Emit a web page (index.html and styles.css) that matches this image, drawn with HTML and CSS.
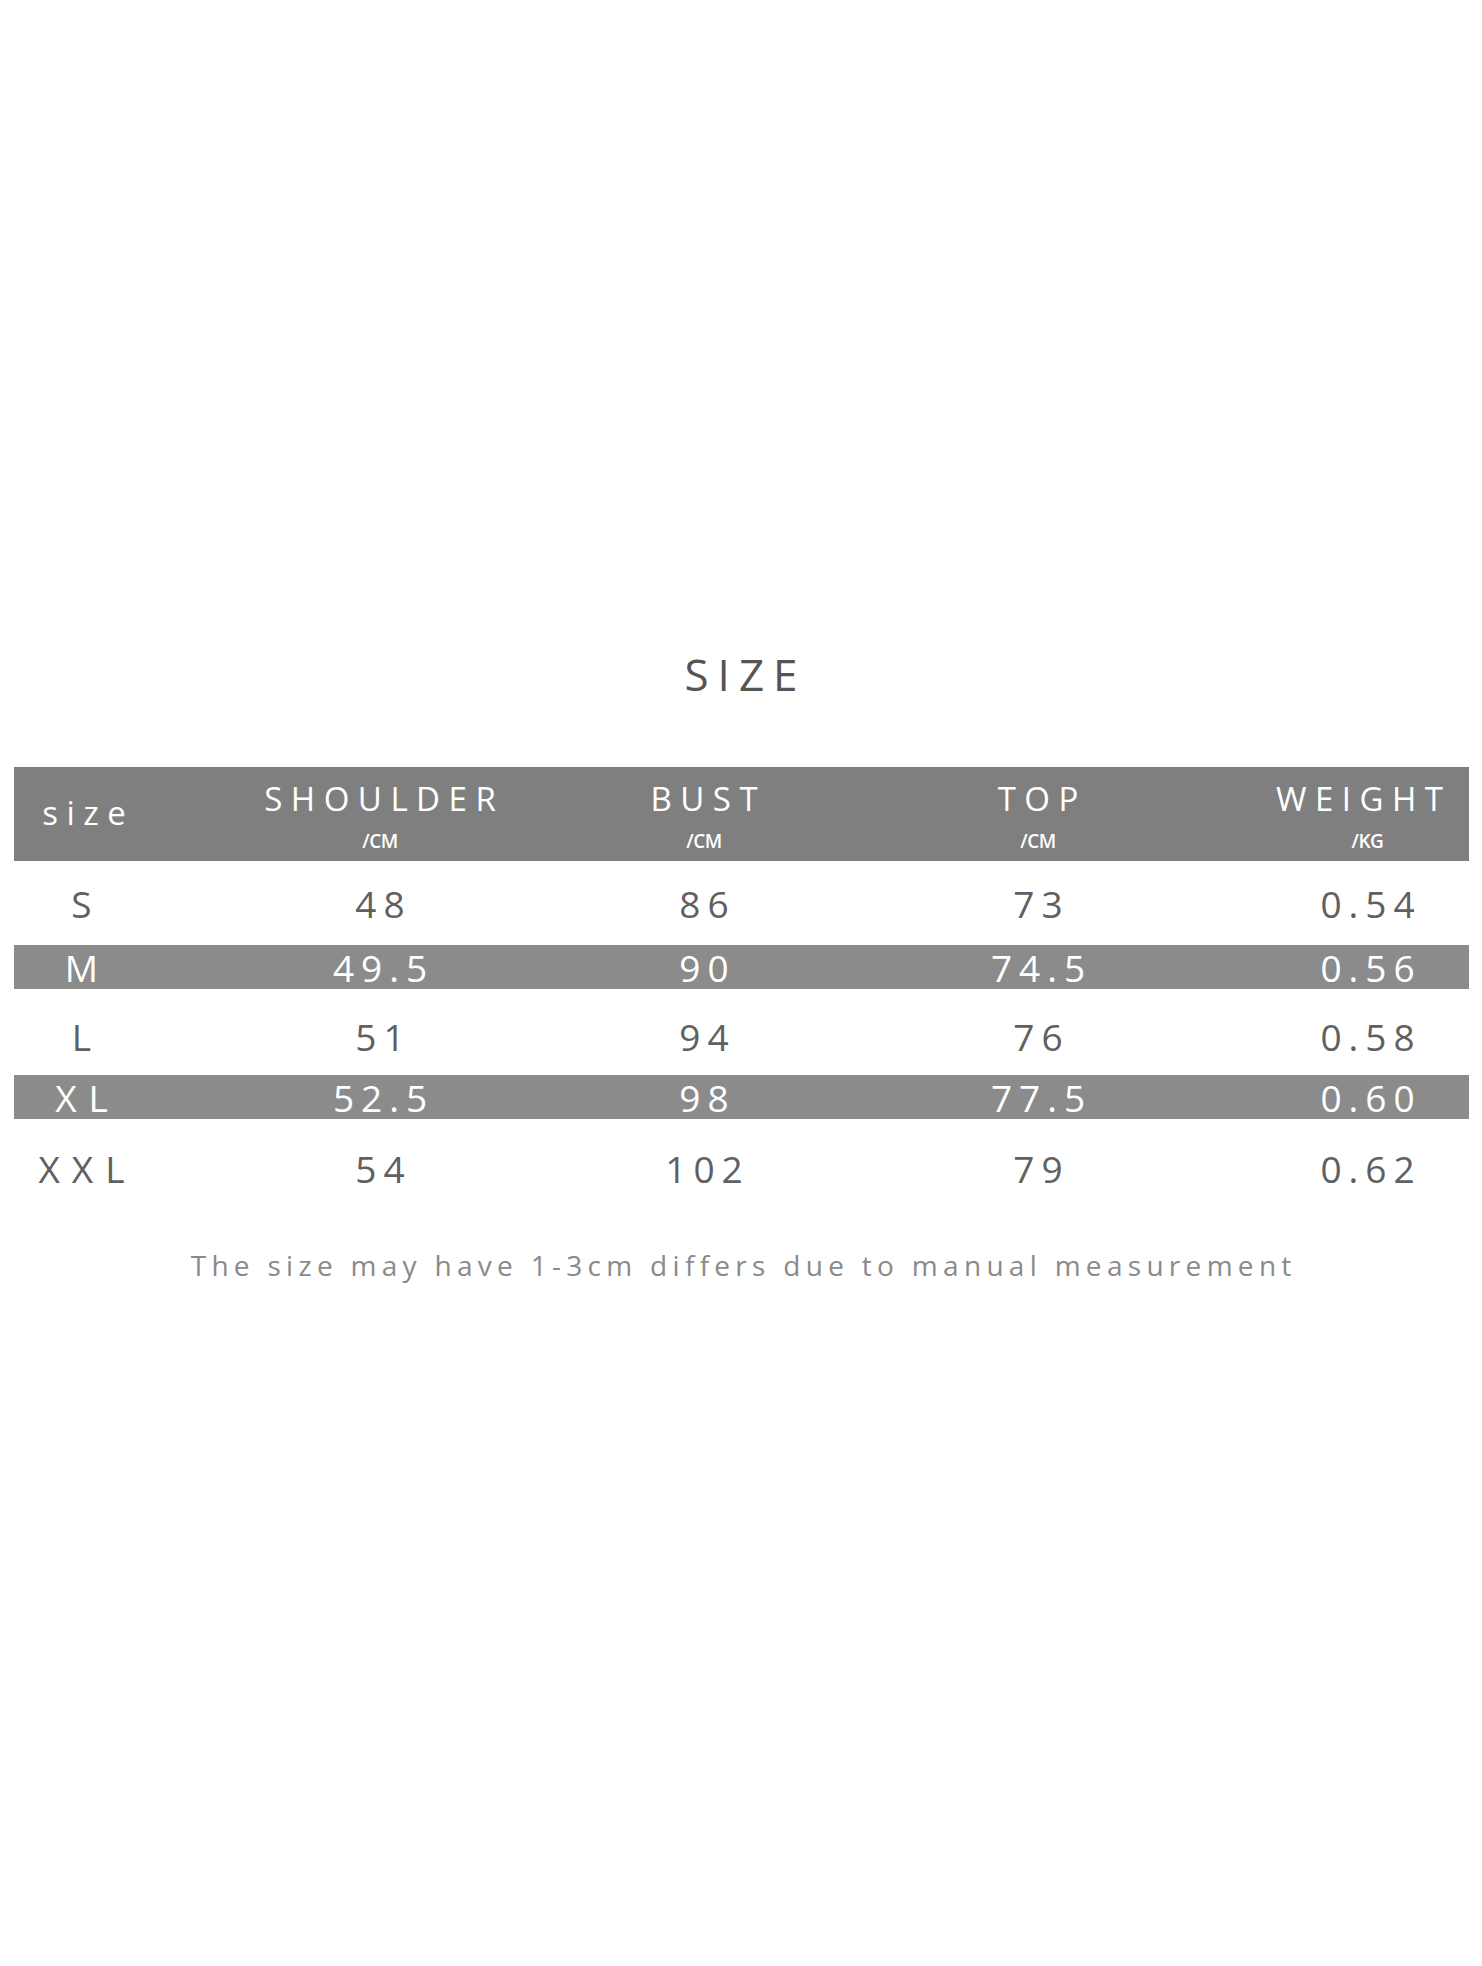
FILE: index.html
```html
<!DOCTYPE html>
<html lang="en">
<head>
<meta charset="utf-8">
<title>Size chart</title>
<link rel="stylesheet" href="styles.css">
</head>
<body>
<main class="sheet">
  <h1 class="title"><span class="ls">SIZE</span></h1>
  <section class="table">
    <div class="row head">
      <div class="cell hcell single"><span class="hlabel ls">size</span></div>
      <div class="cell hcell"><span class="hlabel ls">SHOULDER</span><span class="unit">/CM</span></div>
      <div class="cell hcell"><span class="hlabel ls">BUST</span><span class="unit">/CM</span></div>
      <div class="cell hcell"><span class="hlabel ls">TOP</span><span class="unit">/CM</span></div>
      <div class="cell hcell last"><span class="hlabel ls weight">WEIGHT</span><span class="unit">/KG</span></div>
    </div>
    <div class="row data r-s">
      <div class="cell first"><span class="ls">S</span></div>
      <div class="cell"><span class="ls">48</span></div>
      <div class="cell"><span class="ls">86</span></div>
      <div class="cell"><span class="ls">73</span></div>
      <div class="cell last"><span class="ls">0.54</span></div>
    </div>
    <div class="row data band">
      <div class="cell first"><span class="ls">M</span></div>
      <div class="cell"><span class="ls">49.5</span></div>
      <div class="cell"><span class="ls">90</span></div>
      <div class="cell"><span class="ls">74.5</span></div>
      <div class="cell last"><span class="ls">0.56</span></div>
    </div>
    <div class="row data r-l">
      <div class="cell first"><span class="ls">L</span></div>
      <div class="cell"><span class="ls">51</span></div>
      <div class="cell"><span class="ls">94</span></div>
      <div class="cell"><span class="ls">76</span></div>
      <div class="cell last"><span class="ls">0.58</span></div>
    </div>
    <div class="row data band">
      <div class="cell first"><span class="ls wide">XL</span></div>
      <div class="cell"><span class="ls">52.5</span></div>
      <div class="cell"><span class="ls">98</span></div>
      <div class="cell"><span class="ls">77.5</span></div>
      <div class="cell last"><span class="ls">0.60</span></div>
    </div>
    <div class="row data r-xxl">
      <div class="cell first"><span class="ls wide">XXL</span></div>
      <div class="cell"><span class="ls">54</span></div>
      <div class="cell"><span class="ls">102</span></div>
      <div class="cell"><span class="ls">79</span></div>
      <div class="cell last"><span class="ls">0.62</span></div>
    </div>
  </section>
  <p class="note"><span class="ls">The size may have 1-3cm differs due to manual measurement</span></p>
</main>
</body>
</html>
```

FILE: styles.css
```css
html, body {
  margin: 0;
  padding: 0;
  background: #ffffff;
}

body {
  font-family: "Open Sans", "DejaVu Sans", sans-serif;
  width: 1482px;
  min-height: 1966px;
}

.sheet {
  padding-top: 652px;
}

.title {
  margin: 0;
  font-size: 44px;
  line-height: 44px;
  font-weight: 400;
  color: #555555;
  text-align: center;
  letter-spacing: 9px;
}

.ls {
  display: inline-block;
}

.title .ls {
  margin-right: -9px;
}

.table {
  margin: 71px 13px 0 14px;
}

.row {
  display: grid;
  grid-template-columns: 140px 452px 196px 472px 1fr;
}

.cell {
  display: flex;
  justify-content: center;
  align-items: center;
}

.cell.first {
  padding-right: 5px;
}

.cell.last {
  padding-right: 8px;
}

.head {
  height: 94px;
  background: #7f7f7f;
  color: #ffffff;
  align-items: start;
}

.hcell {
  flex-direction: column;
  justify-content: flex-start;
  padding-top: 15px;
}

.hcell.single {
  padding-top: 29px;
}

.hlabel {
  font-size: 33px;
  line-height: 33px;
  letter-spacing: 8.5px;
  margin-right: -8.5px;
}

.hlabel.weight {
  margin-right: 7.5px;
}

.unit {
  margin-top: 17px;
  font-size: 19px;
  line-height: 19px;
  font-weight: 600;
  letter-spacing: -0.5px;
}

.data {
  font-size: 37px;
  line-height: 37px;
  color: #606060;
}

.data .ls {
  letter-spacing: 7px;
  margin-right: -7px;
}

.data .ls.wide {
  letter-spacing: 12px;
  margin-right: -12px;
}

.r-s {
  height: 84px;
}

.r-l {
  height: 86px;
  padding-top: 9px;
  box-sizing: border-box;
}

.r-xxl {
  height: 98px;
}

.band {
  height: 44px;
  background: #8b8b8b;
  color: #ffffff;
}

.note {
  margin: 34px 0 0 0;
  font-size: 28px;
  line-height: 28px;
  color: #8a8a8a;
  text-align: center;
  letter-spacing: 5.3px;
}

.note .ls {
  margin-right: -5.3px;
}
```
